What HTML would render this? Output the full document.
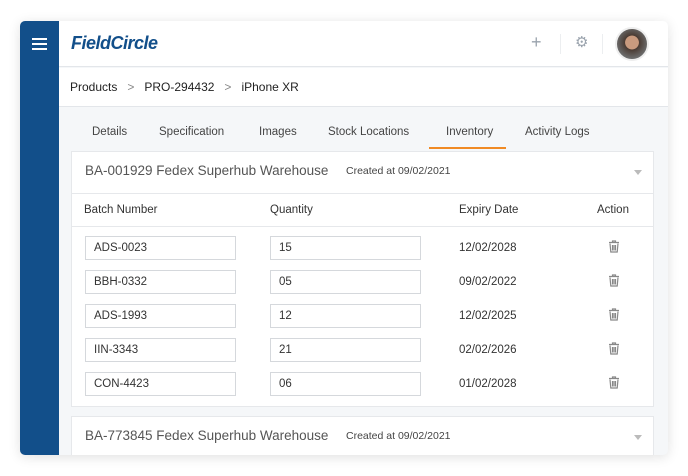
<!DOCTYPE html>
<html><head><style>
*{box-sizing:border-box;margin:0;padding:0}
body{width:688px;height:476px;background:#fff;font-family:"Liberation Sans",sans-serif;position:relative;overflow:hidden;color:#333}
.frame{position:absolute;left:20px;top:21px;width:648px;height:434px;border-radius:5px;overflow:hidden;box-shadow:0 2px 12px rgba(0,0,0,.12);background:#f5f7f9}
.side{position:absolute;left:0;top:0;width:39px;height:100%;background:#124f8a}
.hdr{position:absolute;left:39px;top:0;right:0;height:46px;background:#fff;border-bottom:1px solid #e3e6ea}
.bc{position:absolute;left:39px;top:47px;right:0;height:39px;background:#fff;border-bottom:1px solid #e3e6ea;font-size:12px;color:#222}
.abs{position:absolute;white-space:nowrap}
.card{position:absolute;left:51px;width:583px;background:#fff;border:1px solid #e6e8eb}
.inp{position:absolute;height:24px;border:1px solid #d5d8dc;font-size:11.5px;padding:5px 8px;color:#333;background:#fff}
.t{font-size:11.5px;color:#333}
</style></head><body>
<div class="frame">
 <div class="side">
  <div class="abs" style="left:12px;top:17px;width:15px;height:2px;background:#fff"></div>
  <div class="abs" style="left:12px;top:22px;width:15px;height:2px;background:#fff"></div>
  <div class="abs" style="left:12px;top:27px;width:15px;height:2px;background:#fff"></div>
 </div>
 <div class="hdr">
  <div class="abs" style="left:12px;top:12px;font-size:18px;font-weight:bold;font-style:italic;color:#124f8a;letter-spacing:-0.5px">FieldCircle</div>
  <div class="abs" style="left:472px;top:11px;font-size:18px;color:#9aa3ad">+</div>
  <div class="abs" style="left:501px;top:13px;width:1px;height:20px;background:#eceef0"></div>
  <div class="abs" style="left:516px;top:12px;font-size:15px;color:#9aa3ad">⚙</div>
  <div class="abs" style="left:543px;top:13px;width:1px;height:20px;background:#eceef0"></div>
  <div class="abs" style="left:556px;top:6px;width:34px;height:34px;border-radius:50%;border:2px solid #eee;background:radial-gradient(circle at 50% 45%,#c99a7e 0 30%,#4a3b33 32%,#6b6b6b 70%)"></div>
 </div>
 <div class="bc">
  <div class="abs" style="left:11px;top:12px">Products&nbsp;&nbsp;&nbsp;<span style="color:#888">&gt;</span>&nbsp;&nbsp;&nbsp;PRO-294432&nbsp;&nbsp;&nbsp;<span style="color:#888">&gt;</span>&nbsp;&nbsp;&nbsp;iPhone XR</div>
 </div>
 <div class="abs t" style="top:105px;left:72px;color:#444">Details</div>
 <div class="abs t" style="top:105px;left:139px;color:#444">Specification</div>
 <div class="abs t" style="top:105px;left:239px;color:#444">Images</div>
 <div class="abs t" style="top:105px;left:308px;color:#444">Stock Locations</div>
 <div class="abs t" style="top:105px;left:426px;color:#444">Inventory</div>
 <div class="abs t" style="top:105px;left:505px;color:#444">Activity Logs</div>
 <div class="abs" style="top:126px;left:409px;width:77px;height:2px;background:#f08a24"></div>

 <div class="card" style="top:130px;height:256px">
  <div class="abs" style="left:13px;top:11px;font-size:13.5px;color:#555">BA-001929 Fedex Superhub Warehouse</div>
  <div class="abs" style="left:274px;top:13px;font-size:10.5px;color:#444">Created at 09/02/2021</div>
  <div class="abs" style="left:562px;top:18px;border:4px solid transparent;border-top:5px solid #bbb"></div>
  <div class="abs" style="left:0;right:0;top:41px;height:1px;background:#e6e8eb"></div>
  <div class="abs t" style="left:12px;top:52px;color:#333">Batch Number</div>
  <div class="abs t" style="left:198px;top:52px;color:#333">Quantity</div>
  <div class="abs t" style="left:387px;top:52px;color:#333">Expiry Date</div>
  <div class="abs t" style="left:525px;top:52px;color:#333">Action</div>
  <div class="abs" style="left:0;right:0;top:74px;height:1px;background:#e6e8eb"></div>
 </div>
 <div class="card" style="top:395px;height:50px">
  <div class="abs" style="left:13px;top:11px;font-size:13.5px;color:#555">BA-773845 Fedex Superhub Warehouse</div>
  <div class="abs" style="left:274px;top:13px;font-size:10.5px;color:#444">Created at 09/02/2021</div>
  <div class="abs" style="left:562px;top:18px;border:4px solid transparent;border-top:5px solid #bbb"></div>
 </div>
</div>
<div>
 <div class="inp abs" style="left:85px;top:236px;width:151px">ADS-0023</div>
 <div class="inp abs" style="left:270px;top:236px;width:151px">15</div>
 <div class="abs t" style="left:459px;top:242px">12/02/2028</div>
 <div class="inp abs" style="left:85px;top:270px;width:151px">BBH-0332</div>
 <div class="inp abs" style="left:270px;top:270px;width:151px">05</div>
 <div class="abs t" style="left:459px;top:276px">09/02/2022</div>
 <div class="inp abs" style="left:85px;top:304px;width:151px">ADS-1993</div>
 <div class="inp abs" style="left:270px;top:304px;width:151px">12</div>
 <div class="abs t" style="left:459px;top:310px">12/02/2025</div>
 <div class="inp abs" style="left:85px;top:338px;width:151px">IIN-3343</div>
 <div class="inp abs" style="left:270px;top:338px;width:151px">21</div>
 <div class="abs t" style="left:459px;top:344px">02/02/2026</div>
 <div class="inp abs" style="left:85px;top:372px;width:151px">CON-4423</div>
 <div class="inp abs" style="left:270px;top:372px;width:151px">06</div>
 <div class="abs t" style="left:459px;top:378px">01/02/2028</div>
 <svg class="abs" style="left:608px;top:240px" width="12" height="150" viewBox="0 0 12 150" fill="none" stroke="#888" stroke-width="1.2">
  <g id="tr"><path d="M1 2.5h10M4.5 2.5V1h3v1.5M2 3.5l.8 8.5h6.4l.8-8.5M4.5 5v5.5M6 5v5.5M7.5 5v5.5"/></g>
  <use href="#tr" y="34"/><use href="#tr" y="68"/><use href="#tr" y="102"/><use href="#tr" y="136"/>
 </svg>
</div>
</body></html>
